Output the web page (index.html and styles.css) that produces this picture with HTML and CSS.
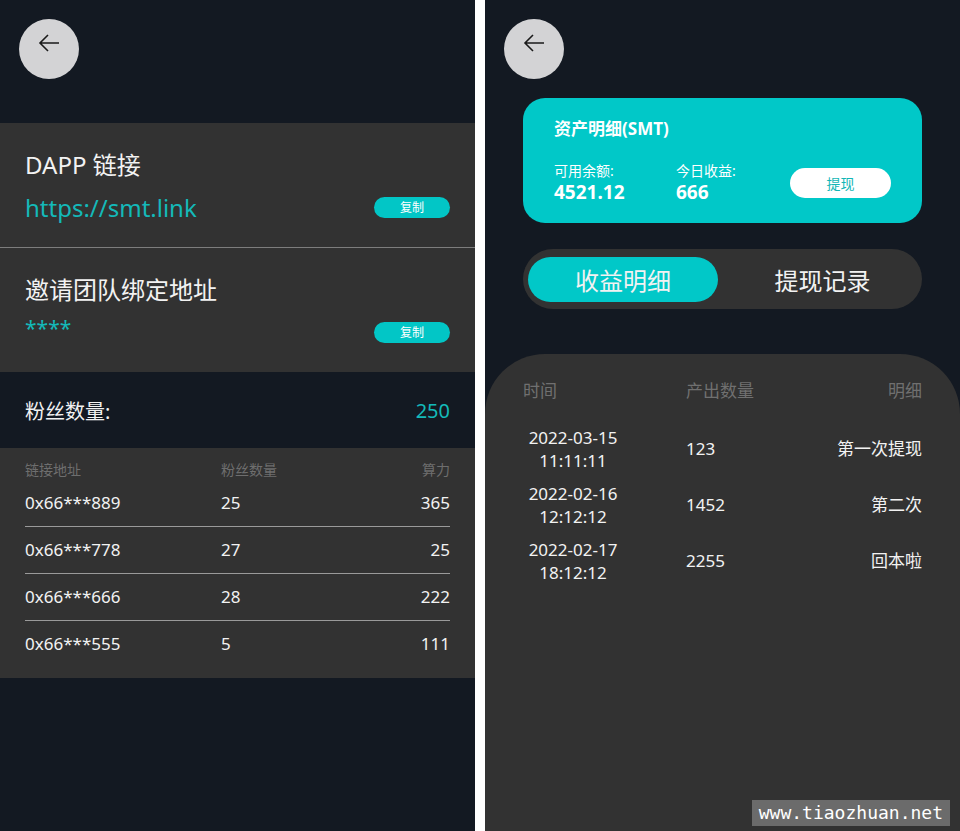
FILE: index.html
```html
<!DOCTYPE html>
<html lang="zh">
<head>
  <meta charset="UTF-8" />
  <meta name="viewport" content="width=device-width, initial-scale=1" />
  <title>SMT</title>
  <link rel="stylesheet" href="styles.css">
</head>
<body>
  <!-- 推广页 -->
  <div class="page">
    <div class="top">
      <a class="back" href="#">
        <svg width="22" height="20" viewBox="0 0 22 20"><path d="M21 10H2M10 2L2 10l8 8" fill="none" stroke="#1a1a1a" stroke-width="1.6"/></svg>
      </a>
    </div>

    <div class="links">
      <div class="link-row">
        <div class="link-title">DAPP 链接</div>
        <div class="link-line">
          <span class="link-val">https://smt.link</span>
          <button class="copy">复制</button>
        </div>
      </div>
      <div class="link-row">
        <div class="link-title">邀请团队绑定地址</div>
        <div class="link-line">
          <span class="link-val stars">****</span>
          <button class="copy">复制</button>
        </div>
      </div>
    </div>

    <div class="fans">
      <span>粉丝数量:</span>
      <span class="fans-num">250</span>
    </div>

    <div class="fans-table">
      <div class="ft-row ft-head">
        <span>链接地址</span><span>粉丝数量</span><span class="r">算力</span>
      </div>
      <div class="ft-row">
        <span>0x66***889</span><span>25</span><span class="r">365</span>
      </div>
      <div class="ft-row">
        <span>0x66***778</span><span>27</span><span class="r">25</span>
      </div>
      <div class="ft-row">
        <span>0x66***666</span><span>28</span><span class="r">222</span>
      </div>
      <div class="ft-row">
        <span>0x66***555</span><span>5</span><span class="r">111</span>
      </div>
    </div>
  </div>

  <!-- 资产页 -->
  <div class="page">
    <div class="top top-small">
      <a class="back" href="#">
        <svg width="22" height="20" viewBox="0 0 22 20"><path d="M21 10H2M10 2L2 10l8 8" fill="none" stroke="#1a1a1a" stroke-width="1.6"/></svg>
      </a>
    </div>

    <div class="asset">
      <div class="asset-title">资产明细(SMT)</div>
      <div class="asset-info">
        <div class="asset-item">
          <div class="asset-label">可用余额:</div>
          <div class="asset-num">4521.12</div>
        </div>
        <div class="asset-item">
          <div class="asset-label">今日收益:</div>
          <div class="asset-num">666</div>
        </div>
        <button class="withdraw">提现</button>
      </div>
    </div>

    <div class="tabs">
      <div class="tab active">收益明细</div>
      <div class="tab">提现记录</div>
    </div>

    <div class="records">
      <div class="rec-head">
        <span>时间</span><span>产出数量</span><span class="r">明细</span>
      </div>
      <div class="rec-row">
        <span class="rec-time">2022-03-15<br>11:11:11</span><span>123</span><span class="r">第一次提现</span>
      </div>
      <div class="rec-row">
        <span class="rec-time">2022-02-16<br>12:12:12</span><span>1452</span><span class="r">第二次</span>
      </div>
      <div class="rec-row">
        <span class="rec-time">2022-02-17<br>18:12:12</span><span>2255</span><span class="r">回本啦</span>
      </div>
    </div>

    <div class="mark">www.tiaozhuan.net</div>
  </div>
</body>
</html>
```

FILE: styles.css
```css
* {
  margin: 0;
  padding: 0;
  box-sizing: border-box;
}
html, body {
  height: 100%;
}
body {
  display: flex;
  gap: 10px;
  background: #ffffff;
  font-family: 'Segoe UI', 'Microsoft YaHei', 'Noto Sans', 'Noto Sans CJK SC', sans-serif;
  color: #f2f2f2;
  overflow: hidden;
}
.page {
  position: relative;
  width: 475px;
  height: 831px;
  background: #131922;
  display: flex;
  flex-direction: column;
}
.top {
  height: 123px;
  padding: 19px;
}
.top-small {
  height: 98px;
}
.back {
  width: 60px;
  height: 60px;
  border-radius: 50%;
  background: #d3d3d5;
  display: flex;
  justify-content: center;
  align-items: center;
  padding-bottom: 12px;
}

/* links */
.links {
  background: #323232;
}
.link-row {
  padding: 26px 25px 24px;
}
.link-row + .link-row {
  border-top: 1px solid #7d7d7d;
}
.link-title {
  font-size: 24px;
  line-height: 32px;
}
.link-line {
  margin-top: 10px;
  height: 32px;
  display: flex;
  justify-content: space-between;
  align-items: center;
}
.link-val {
  font-size: 24px;
  color: #14b9b9;
}
.stars {
  font-size: 21px;
  margin-top: -8px;
}
.copy {
  width: 76px;
  height: 21px;
  border: none;
  border-radius: 11px;
  background: #02c6c6;
  color: #fff;
  font-family: inherit;
  font-size: 12px;
}

.fans {
  height: 76px;
  padding: 0 25px;
  display: flex;
  justify-content: space-between;
  align-items: center;
  font-size: 20px;
}
.fans-num {
  color: #14b9b9;
}

.fans-table {
  background: #323232;
  padding: 12px 25px 11px;
}
.ft-row {
  display: grid;
  grid-template-columns: 196px 1fr auto;
  font-size: 17px;
  line-height: 46px;
}
.ft-row + .ft-row + .ft-row {
  border-top: 1px solid #9a9a9a;
}
.ft-head {
  font-size: 14px;
  line-height: 20px;
  color: #6e6e6e;
}
.r {
  text-align: right;
}

/* asset */
.asset {
  margin: 0 38px;
  height: 125px;
  border-radius: 22px;
  background: #01c8c8;
  padding: 18px 31px 0;
  color: #fff;
}
.asset-title {
  font-size: 17px;
  font-weight: 700;
  line-height: 26px;
}
.asset-info {
  margin-top: 20px;
  display: flex;
  align-items: center;
}
.asset-item {
  width: 122px;
}
.asset-label {
  font-size: 14px;
  line-height: 18px;
}
.asset-num {
  font-size: 19px;
  font-weight: 700;
  line-height: 24px;
}
.withdraw {
  width: 101px;
  height: 30px;
  border: none;
  border-radius: 15px;
  background: #fff;
  color: #13b6b6;
  font-family: inherit;
  font-size: 14px;
  margin-left: -8px;
}

.tabs {
  margin: 26px 38px 0;
  height: 60px;
  border-radius: 30px;
  background: #323232;
  padding: 8px 5px 7px;
  display: flex;
}
.tab {
  flex: 1;
  border-radius: 23px;
  display: flex;
  justify-content: center;
  align-items: center;
  font-size: 24px;
  padding-left: 10px;
}
.tab.active {
  flex: 0 0 190px;
  padding-left: 0;
  background: #01c8c8;
}

.records {
  flex: 1;
  margin-top: 45px;
  background: #323232;
  border-radius: 60px 60px 0 0;
  padding: 25px 38px 0;
}
.rec-head, .rec-row {
  display: grid;
  grid-template-columns: 163px 1fr auto;
  align-items: center;
  font-size: 17px;
}
.rec-head {
  line-height: 24px;
  color: #707070;
  margin-bottom: 24px;
}
.rec-row {
  line-height: 22.5px;
  margin-bottom: 11px;
}
.rec-time {
  width: 100px;
  text-align: center;
}

.mark {
  position: absolute;
  right: 10px;
  bottom: 5px;
  padding: 2px 7px;
  background: #6b6b6b;
  font-family: 'DejaVu Sans Mono', monospace;
  font-size: 18px;
  line-height: 22px;
  color: #fff;
}
```
